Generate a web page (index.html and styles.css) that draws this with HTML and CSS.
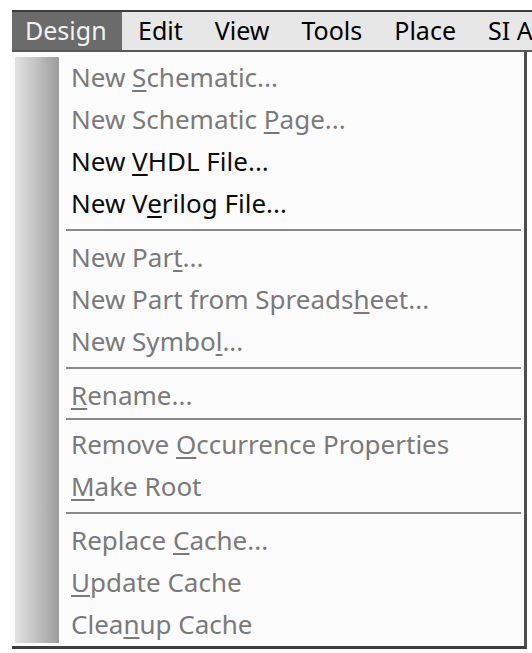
FILE: index.html
```html
<!DOCTYPE html>
<html>
<head>
<meta charset="utf-8">
<link rel="stylesheet" href="styles.css">
</head>
<body>
<div class="screen">
  <div class="menubar">
    <span class="mb-item active">Design</span>
    <span class="mb-item">Edit</span>
    <span class="mb-item">View</span>
    <span class="mb-item">Tools</span>
    <span class="mb-item">Place</span>
    <span class="mb-item">SI A</span>
  </div>
  <div class="dropdown">
    <div class="strip"></div>
    <div class="items">
      <div class="item dis"><span>New <u>S</u>chematic...</span></div>
      <div class="item dis"><span>New Schematic <u>P</u>age...</span></div>
      <div class="item"><span>New <u>V</u>HDL File...</span></div>
      <div class="item"><span>New V<u>e</u>rilog File...</span></div>
      <div class="sep"></div>
      <div class="item dis"><span>New Par<u>t</u>...</span></div>
      <div class="item dis"><span>New Part from Spreads<u>h</u>eet...</span></div>
      <div class="item dis"><span>New Symbo<u>l</u>...</span></div>
      <div class="sep"></div>
      <div class="item dis"><span><u>R</u>ename...</span></div>
      <div class="sep sep-tight"></div>
      <div class="item dis"><span>Remove <u>O</u>ccurrence Properties</span></div>
      <div class="item dis"><span><u>M</u>ake Root</span></div>
      <div class="sep"></div>
      <div class="item dis"><span>Replace <u>C</u>ache...</span></div>
      <div class="item dis"><span><u>U</u>pdate Cache</span></div>
      <div class="item dis"><span>Clea<u>n</u>up Cache</span></div>
    </div>
  </div>
</div>
</body>
</html>
```
FILE: styles.css
```css
html, body {
  margin: 0;
  padding: 0;
  background: #ffffff;
  font-family: "Noto Sans", "Open Sans", sans-serif;
}
.screen {
  padding-top: 10px;
  padding-left: 12px;
  width: 520px;
  overflow: hidden;
}
.menubar {
  display: flex;
  align-items: stretch;
  height: 38px;
  background: #e7e7e7;
  border-top: 2px solid #3c3c3c;
  border-bottom: 2px solid #5a5a5a;
  white-space: nowrap;
  font-size: 25px;
  color: #000;
}
.mb-item {
  flex: none;
  display: flex;
  align-items: center;
  padding: 0 16px 3px 16px;
}
.mb-item.active {
  background: #6b6b6b;
  color: #f2f2f2;
  width: 110px;
  box-sizing: border-box;
  padding-left: 13px;
  padding-right: 0;
}
.dropdown {
  display: flex;
  width: 515px;
  height: 597px;
  background: #fcfcfc;
  border-right: 3px solid #4e4e4e;
  border-bottom: 3px solid #3e3e3e;
  box-sizing: border-box;
  padding: 5px 0 3px 3px;
}
.strip {
  width: 44px;
  flex: none;
  background: linear-gradient(to right, #e2e2e2 0%, #c4c4c4 45%, #9c9c9c 100%);
}
.items {
  flex: 1;
  padding-left: 7px;
  padding-right: 3px;
  margin-top: -1px;
}
.item {
  height: 42px;
  display: flex;
  align-items: center;
  padding-left: 5px;
  font-size: 26px;
  color: #0c0c0c;
  white-space: nowrap;
}
.item.dis {
  color: #7a7a7a;
}
.item u {
  text-decoration-thickness: 2px;
  text-underline-offset: 3px;
}
.sep {
  height: 2px;
  margin: 5px 0;
  background: #8a8a8a;
}
.sep.sep-tight {
  margin: 2px 0 3px;
}
```
